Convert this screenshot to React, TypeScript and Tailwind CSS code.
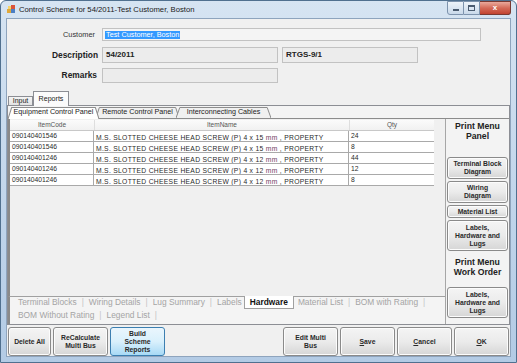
import React from 'react';

const rows = [
  { code: '090140401546', size: '15', qty: '24' },
  { code: '090140401546', size: '15', qty: '8' },
  { code: '090140401246', size: '12', qty: '44' },
  { code: '090140401246', size: '12', qty: '12' },
  { code: '090140401246', size: '12', qty: '8' },
];

const btn =
  'flex flex-col items-center justify-center rounded-[3px] border border-[#8a8a8a] bg-gradient-to-b from-[#f4f4f4] via-[#ebebeb] to-[#d6d6d6] text-[6.8px] leading-[8px] font-bold text-[#2a2a2a] text-center shadow-[inset_0_0_0_1px_#fcfcfc]';

const SubTab: React.FC<{ label: string; active?: boolean; w: string }> = ({ label, active, w }) => (
  <div className={`relative flex items-center justify-center ${w} ${active ? 'z-10 h-[12px] -mb-px' : '-ml-[3px] h-[11px]'}`}>
    <svg className="absolute inset-0 w-full h-full" viewBox="0 0 100 11" preserveAspectRatio="none">
      <polygon points="0,11 4,0.5 96,0.5 100,11" fill={active ? '#ffffff' : '#f0f0f0'} />
      <polyline
        points="0,11 4,0.5 96,0.5 100,11"
        fill="none"
        stroke="#8c8c8c"
        strokeWidth="1"
        vectorEffect="non-scaling-stroke"
      />
    </svg>
    <span className={`relative text-[7.2px] text-[#222] ${active ? '-mt-px' : ''}`}>{label}</span>
  </div>
);

const Sep = () => <span className="text-[#c4c4c4] text-[8.4px] px-[5px]">|</span>;

const App: React.FC = () => {
  return (
    <div className="w-[517px] h-[363px] overflow-hidden flex flex-col rounded-t-[6px] border border-[#50708f] bg-gradient-to-b from-[#d6e4f2] via-[#c3d7ec] to-[#b3cbe5] font-['Liberation_Sans',Arial,sans-serif]">
      {/* title bar */}
      <div className="h-[17px] flex items-start">
        <svg className="ml-[6px] mt-[4px]" width="9" height="9" viewBox="0 0 9 9">
          <rect x="0" y="4" width="4" height="4" fill="#e0a83a" />
          <rect x="4" y="0" width="4" height="4" fill="#d9533c" />
          <rect x="4" y="4" width="4" height="4" fill="#4b7fc4" />
          <rect x="1" y="1" width="3" height="3" fill="#f5d46b" />
        </svg>
        <span className="ml-[3px] mt-[3px] text-[7.7px] text-[#1a1a1a]">Control Scheme for 54/2011-Test Customer, Boston</span>
        <div className="ml-auto mr-[5px] flex">
          <div className="w-[17px] h-[14px] border border-[#7d93ad] rounded-bl-[3px] bg-gradient-to-b from-[#eef4fa] to-[#c9d9ea] flex items-center justify-center">
            <div className="w-[6px] h-[2px] mt-[4px] bg-[#4a5b70]" />
          </div>
          <div className="w-[16px] h-[14px] border border-l-0 border-[#7d93ad] bg-gradient-to-b from-[#eef4fa] to-[#c9d9ea] flex items-center justify-center">
            <div className="w-[7px] h-[6px] border border-[#4a5b70] border-t-2" />
          </div>
          <div className="w-[31px] h-[14px] border border-l-0 border-[#7a3a32] rounded-br-[3px] bg-gradient-to-b from-[#e9a99c] via-[#d46a58] to-[#c24330] flex items-center justify-center">
            <span className="text-[8px] font-bold text-white leading-none">x</span>
          </div>
        </div>
      </div>

      {/* client area */}
      <div className="mx-[5px] h-[339px] border border-[#8ea4bd] bg-[#f0f0f0] flex flex-col">
        {/* Customer */}
        <div className="mt-[9px] h-[13px] flex items-center">
          <div className="w-[88px] text-right text-[7.4px] text-[#333]">Customer</div>
          <div className="ml-[7px] w-[379px] h-[13px] border border-[#c2c2c2] bg-[#f4f4f4] flex items-center pl-[2px]">
            <span className="bg-[#3399ff] text-white text-[7.3px] leading-[8px] px-[1px]">Test Customer, Boston</span>
          </div>
        </div>
        {/* Description */}
        <div className="mt-[6px] h-[16px] flex items-center">
          <div className="w-[91px] text-right text-[8.4px] font-bold text-[#222]">Description</div>
          <div className="ml-[4px] w-[176px] h-[16px] border border-[#c2c2c2] bg-[#ececec] flex items-center pl-[3px] text-[8px] font-bold text-[#222]">
            54/2011
          </div>
          <div className="ml-[4px] w-[136px] h-[16px] border border-[#c2c2c2] bg-[#ececec] flex items-center pl-[3px] text-[8px] font-bold text-[#222]">
            RTGS-9/1
          </div>
        </div>
        {/* Remarks */}
        <div className="mt-[5px] h-[15px] flex items-center">
          <div className="w-[90px] text-right text-[8.4px] font-bold text-[#222]">Remarks</div>
          <div className="ml-[5px] w-[176px] h-[15px] border border-[#c2c2c2] bg-[#ececec]" />
        </div>

        {/* outer tabs */}
        <div className="mt-[8px] h-[14px] flex items-end pl-[1px]">
          <div className="w-[25px] h-[9px] border border-b-0 border-[#8c8e94] bg-gradient-to-b from-[#f4f4f4] to-[#e3e3e3] flex items-center justify-center text-[7px] text-[#222]">
            Input
          </div>
          <div className="w-[36px] h-[15px] -mb-px border border-b-0 border-[#8c8e94] bg-[#fbfbfb] flex items-start justify-center pt-[2px] text-[7.1px] text-[#222] relative z-10">
            Reports
          </div>
        </div>

        {/* outer tab page */}
        <div className="h-[220px] border border-[#8c8e94] bg-[#f4f4f4] flex flex-col">
          {/* sub tabs */}
          <div className="h-[12px] flex items-end pt-[1px]">
            <SubTab label="Equipment Control Panel" active w="w-[91px]" />
            <SubTab label="Remote Control Panel" w="w-[83px]" />
            <SubTab label="Interconnecting Cables" w="w-[95px]" />
          </div>
          <div className="flex-1 border-t border-[#8c8c8c] flex">
            {/* left side: grid + bottom tabs */}
            <div className="w-[438px] flex flex-col">
              <div className="h-[177px] border-l-2 border-[#8a8a8a] bg-[#f0f0f0] pt-[1px]">
                <div className="w-[424px] bg-white">
                  <div className="h-[11px] flex bg-gradient-to-b from-[#fbfbfb] to-[#f1f1f1] text-[6.5px] text-[#555] border-b border-[#c8c8c8]">
                    <div className="w-[84px] flex items-center justify-center">ItemCode</div>
                    <div className="w-[255px] flex items-center justify-center border-l border-[#dedede]">ItemName</div>
                    <div className="w-[85px] flex items-center justify-center border-l border-[#dedede]">Qty</div>
                  </div>
                  {rows.map((r, i) => (
                    <div key={i} className="h-[11px] flex text-[6.75px] text-[#2a2a2a] border-b border-[#a9a9a9] overflow-hidden">
                      <div className="w-[84px] pl-[2px] flex items-center border-r border-[#a9a9a9]">{r.code}</div>
                      <div className="w-[255px] pl-[2px] pt-[1.5px] border-r border-[#a9a9a9] tracking-[0.3px] whitespace-nowrap overflow-hidden">
                        M.S. SLOTTED CHEESE HEAD SCREW (P) 4 x {r.size} <span className="text-[#6b3f62]">mm</span> , PROPERTY
                      </div>
                      <div className="w-[85px] pl-[2px] flex items-center">{r.qty}</div>
                    </div>
                  ))}
                </div>
              </div>
              {/* bottom tabs */}
              <div className="flex-1 border-t border-[#a0a0a0] border-l-2 border-l-[#8a8a8a] text-[8.4px] text-[#a4a4a4]">
                <div className="h-[13px] flex items-center pl-[8px] -mt-px">
                  <span>Terminal Blocks</span>
                  <Sep />
                  <span>Wiring Details</span>
                  <Sep />
                  <span>Lug Summary</span>
                  <Sep />
                  <span>Labels</span>
                  <span className="ml-[2px] h-[13px] px-[5px] flex items-center bg-white border border-t-0 border-[#a0a0a0] font-bold text-[#111]">Hardware</span>
                  <span className="ml-[4px]">Material List</span>
                  <Sep />
                  <span>BOM with Rating</span>
                  <Sep />
                </div>
                <div className="h-[13px] flex items-center pl-[8px]">
                  <span>BOM Without Rating</span>
                  <Sep />
                  <span>Legend List</span>
                  <Sep />
                </div>
              </div>
            </div>

            {/* right panel */}
            <div className="flex-1 border-l border-[#a6a6a6] bg-[#f3f3f3] flex flex-col items-center px-[1px]">
              <div className="h-[38px] pt-[3px] text-[8.7px] leading-[9.5px] font-bold text-[#222] text-center">
                Print Menu
                <br />
                Panel
              </div>
              <div className={`${btn} w-[61px] h-[22px]`}>
                <span>Terminal Block</span>
                <span>Diagram</span>
              </div>
              <div className={`${btn} w-[61px] h-[22px] mt-[2px]`}>
                <span>Wiring</span>
                <span>Diagram</span>
              </div>
              <div className={`${btn} w-[61px] h-[13px] mt-[2px]`}>
                <span>Material List</span>
              </div>
              <div className={`${btn} w-[61px] h-[31px] mt-[2px]`}>
                <span>Labels,</span>
                <span>Hardware and</span>
                <span>Lugs</span>
              </div>
              <div className="h-[36px] pt-[7px] text-[8.7px] leading-[9.5px] font-bold text-[#222] text-center">
                Print Menu
                <br />
                Work Order
              </div>
              <div className={`${btn} w-[61px] h-[31px]`}>
                <span>Labels,</span>
                <span>Hardware and</span>
                <span>Lugs</span>
              </div>
            </div>
          </div>
        </div>

        {/* bottom buttons */}
        <div className="mt-[2px] h-[29px] flex pl-[1px] pr-[1px]">
          <div className={`${btn} w-[43px] h-[29px]`}>Delete All</div>
          <div className={`${btn} w-[55px] h-[29px] ml-[2px]`}>
            <span>ReCalculate</span>
            <span>Multi Bus</span>
          </div>
          <div className="ml-[2px] w-[55px] h-[29px] rounded-[3px] border border-[#3c7fb1] bg-gradient-to-b from-[#eaf6fd] via-[#d9f0fc] to-[#a7d9f5] flex flex-col items-center justify-center text-[6.8px] leading-[8px] font-bold text-[#2a2a2a] text-center">
            <span>Build</span>
            <span>Scheme</span>
            <span>Reports</span>
          </div>
          <div className={`${btn} w-[55px] h-[29px] ml-auto`}>
            <span>Edit Multi</span>
            <span>Bus</span>
          </div>
          <div className={`${btn} w-[55px] h-[29px] ml-[2px]`}>
            <span><span className="underline">S</span>ave</span>
          </div>
          <div className={`${btn} w-[55px] h-[29px] ml-[2px]`}>
            <span><span className="underline">C</span>ancel</span>
          </div>
          <div className={`${btn} w-[55px] h-[29px] ml-[2px]`}>
            <span><span className="underline">O</span>K</span>
          </div>
        </div>
      </div>
    </div>
  );
};

export default App;
